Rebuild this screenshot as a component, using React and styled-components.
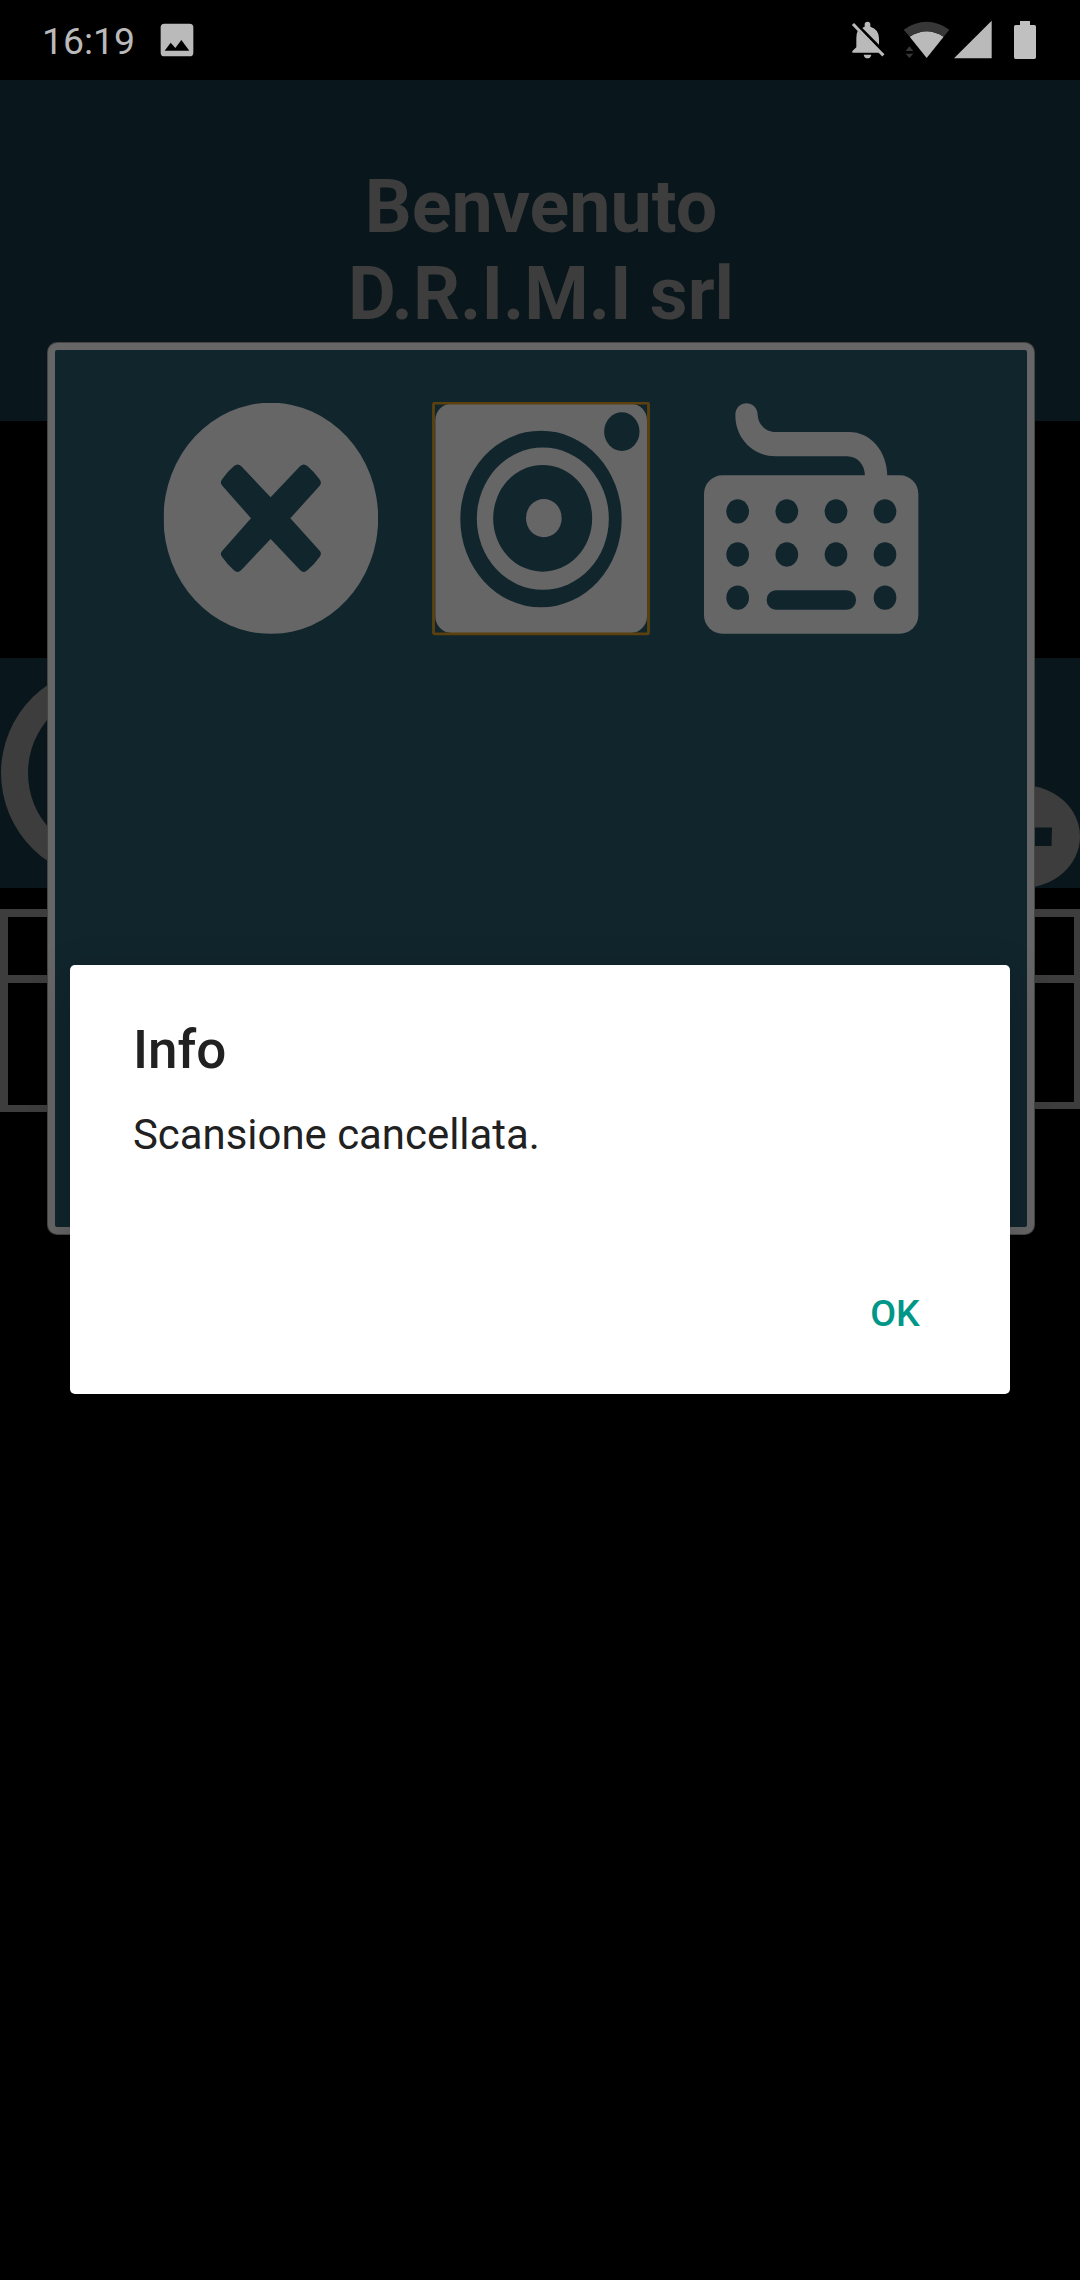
import React from "react";
import styled, { createGlobalStyle } from "styled-components";

const GlobalStyle = createGlobalStyle`
  * { box-sizing: border-box; }
  html, body { margin: 0; background: #000; }
  body { font-family: Roboto, "Noto Sans", sans-serif; }
`;

const ink = "#11252d";
const grey = "#666666";
const dimGrey = "#3d3d3d";
const dimInk = "#09161b";

const Screen = styled.main`
  position: relative;
  width: 1080px;
  height: 2280px;
  overflow: hidden;
  background: #000;
  display: flex;
  flex-direction: column;
`;

const StatusBar = styled.header`
  height: 80px;
  flex: none;
  display: flex;
  align-items: flex-start;
  justify-content: space-between;
  padding-left: 42px;
`;

const StatusLeft = styled.div`
  display: flex;
  gap: 26px;
`;

const Clock = styled.span`
  font-size: 37.4px;
  line-height: 44px;
  padding-top: 19px;
  width: 92px;
  white-space: nowrap;
  color: #bababa;
`;

const Glyphs = styled.svg`
  display: block;
  width: ${(p) => p.$w}px;
  height: ${(p) => p.$h}px;
`;

const Welcome = styled.section`
  height: 341px;
  flex: none;
  padding: 84px 0 0 2px;
  background: ${dimInk};
`;

const WelcomeTitle = styled.h1`
  margin: 0;
  font-size: 73.6px;
  line-height: 87px;
  font-weight: 700;
  text-align: center;
  color: ${dimGrey};
`;

const ActionBand = styled.section`
  height: 230px;
  flex: none;
  margin-top: 237px;
  display: flex;
  justify-content: space-between;
  background: ${dimInk};
`;

const Grid = styled.section`
  display: flex;
  align-items: flex-start;
  margin-top: 21px;
`;

const GridColumn = styled.div`
  flex: 1;
  height: ${(p) => p.$height}px;
  display: flex;
  flex-direction: column;
  border: 7px solid ${dimGrey};
  border-top-width: 8px;
  border-left-width: ${(p) => p.$left}px;
  border-right-width: ${(p) => p.$right}px;
`;

const GridHead = styled.div`
  height: 66px;
  border-bottom: 8px solid ${dimGrey};
`;

const ScanPanel = styled.section`
  position: absolute;
  left: 48px;
  top: 343px;
  width: 986px;
  height: 891px;
  border: 7px solid ${grey};
  border-radius: 9px;
  background: ${ink};
  box-shadow: 0 0 0 1px #454545;
  display: flex;
  align-items: flex-start;
  padding: 52px 0 0 107px;
  gap: 52px;
`;

const PanelButton = styled.button`
  display: block;
  width: 218px;
  height: 234px;
  flex: none;
  padding: 0;
  border: 0;
  background: none;
`;

const Dialog = styled.section`
  position: absolute;
  left: 70px;
  top: 965px;
  width: 939.7px;
  height: 428.5px;
  border-radius: 5px;
  background: #fff;
  color: #212121;
  display: flex;
  flex-direction: column;
  padding: 54px 63px 0;
  box-shadow: 0 12px 44px rgba(0, 0, 0, 0.2);
`;

const DialogTitle = styled.h2`
  margin: 0;
  font-size: 53px;
  line-height: 62px;
  font-weight: 500;
`;

const DialogText = styled.p`
  margin: 29px 0 0;
  font-size: 41.9px;
  line-height: 50px;
`;

const DialogActions = styled.footer`
  display: flex;
  justify-content: flex-end;
  padding: 131px 27px 0 0;
`;

const DialogButton = styled.button`
  padding: 0;
  border: 0;
  background: none;
  font: 500 37.5px/44px Roboto, sans-serif;
  color: #009688;
`;

function PictureIcon() {
  return (
    <Glyphs $w={34} $h={80} viewBox="480 0 102 240">
      <path
        fill="#bababa"
        fillRule="evenodd"
        d="M493 71H569Q580 71 580 82V158Q580 169 569 169H493Q482 169 482 158V82Q482 71 493 71ZM494 152H568L544 120L526 144L512 128Z"
      />
    </Glyphs>
  );
}

function SystemIcons() {
  return (
    <Glyphs $w={260} $h={80} viewBox="0 0 780 240">
      <g fill="#bababa">
        <path d="M134 80V73Q134 65 142.500 65Q151 65 151 73V80Q177 88 177 115V134L127 84Q130 81 134 80Z" />
        <path d="M113 92L179 158H97V153L109 142V115Q109 101 113 92Z" />
        <path d="M131 164H154Q152 175 142.500 175Q133 175 131 164Z" />
        <path d="M402 175L515 62V175Z" />
        <path d="M320 174L269 110Q320 77 371 110Z" />
      </g>
      <path d="M102 75L187 163" stroke="#bababa" strokeWidth="9" strokeLinecap="square" />
      <path d="M110 72L190 155" stroke="#000" strokeWidth="5" />
      <path d="M251 89Q320 42 388 89L371 110Q320 77 269 110Z" fill="#373737" />
      <path d="M257 153L268 139L280 153ZM257 161H280L268 174Z" fill="#373737" />
      <path
        d="M600 63H630V75H643Q648 75 648 80V172Q648 177 643 177H587Q582 177 582 172V80Q582 75 587 75H600Z"
        fill="#c0c0c0"
      />
    </Glyphs>
  );
}

function RingIcon() {
  return (
    <Glyphs $w={216} $h={230} viewBox="0 0 216 230">
      <path
        fill={dimGrey}
        fillRule="evenodd"
        d="M1 115A108 107 0 0 1 217 115A108 107 0 0 1 1 115ZM28 115A81 82 0 0 0 190 115A81 82 0 0 0 28 115Z"
      />
    </Glyphs>
  );
}

function AddIcon() {
  return (
    <Glyphs $w={216} $h={230} viewBox="864 658 216 230">
      <ellipse cx="1022" cy="836.500" rx="58" ry="51.500" fill={dimGrey} />
      <path d="M992 827.500H1012V809H1031V827.500H1052L1051.500 846H1031V865H1012V846H992Z" fill={dimInk} />
    </Glyphs>
  );
}

function CancelIcon() {
  return (
    <Glyphs $w={218} $h={234} viewBox="66 66 654 702">
      <clipPath id="cancelEdge">
        <rect x="71" y="69" width="643" height="692" />
      </clipPath>
      <ellipse cx="392.500" cy="415" rx="322" ry="347" fill={grey} clipPath="url(#cancelEdge)" />
      <path
        fill={ink}
        d="M392 352L480 259Q491 248 502 258Q522 275 538 297Q547 308 539 317L451 415L539 512Q547 521 538 532Q522 555 502 571Q491 581 480 570L392 477L304 570Q293 581 282 571Q262 554 247 532Q238 521 247 512L333 415L247 317Q238 308 247 297Q262 275 282 258Q293 248 304 259Z"
      />
    </Glyphs>
  );
}

function CameraIcon() {
  return (
    <Glyphs $w={218} $h={234} viewBox="36 66 654 702">
      <rect x="46" y="71" width="635" height="688" rx="48" ry="50" fill={grey} />
      <rect x="40.500" y="69.500" width="645" height="692" rx="4" fill="none" stroke="#5c410e" strokeWidth="8.500" />
      <ellipse cx="363" cy="417" rx="242" ry="265" fill={ink} />
      <ellipse cx="368.500" cy="416" rx="198" ry="213.500" fill={grey} />
      <ellipse cx="368" cy="415" rx="148.500" ry="160" fill={ink} />
      <ellipse cx="371.500" cy="414.500" rx="53.500" ry="57.500" fill={grey} />
      <ellipse cx="605.500" cy="155" rx="53" ry="58" fill={ink} />
    </Glyphs>
  );
}

const keyRows = [
  [394, [173, 320.5, 468, 615]],
  [523.5, [173, 320.5, 468, 615]],
  [653, [173, 615]],
];

function KeyboardIcon() {
  return (
    <Glyphs $w={218} $h={234} viewBox="66 66 654 702">
      <rect x="72" y="286" width="643" height="475" rx="55" fill={grey} />
      <path
        fill={grey}
        d="M166 106C166 58 233 58 233 106C235 135 258 156 286 156H508C570 156 622 212 622 290H555C555 254 533 229 501 229H286C218 229 166 174 166 106Z"
      />
      {keyRows.map(([y, xs]) =>
        xs.map((x) => <ellipse key={`${x}-${y}`} cx={x} cy={y} rx="34" ry="36.500" fill={ink} />)
      )}
      <rect x="260" y="631" width="268" height="58" rx="28" fill={ink} />
    </Glyphs>
  );
}

export default function App() {
  return (
    <>
      <GlobalStyle />
      <Screen>
        <StatusBar>
          <StatusLeft>
            <Clock>16:19</Clock>
            <PictureIcon />
          </StatusLeft>
          <SystemIcons />
        </StatusBar>
        <Welcome>
          <WelcomeTitle>
            Benvenuto
            <br />
            D.R.I.M.I srl
          </WelcomeTitle>
        </Welcome>
        <ActionBand>
          <RingIcon />
          <AddIcon />
        </ActionBand>
        <Grid>
          <GridColumn $height={203} $left={8} $right={4}>
            <GridHead />
          </GridColumn>
          <GridColumn $height={200} $left={4} $right={6}>
            <GridHead />
          </GridColumn>
        </Grid>
        <ScanPanel>
          <PanelButton>
            <CancelIcon />
          </PanelButton>
          <PanelButton>
            <CameraIcon />
          </PanelButton>
          <PanelButton>
            <KeyboardIcon />
          </PanelButton>
        </ScanPanel>
        <Dialog role="alertdialog">
          <DialogTitle>Info</DialogTitle>
          <DialogText>Scansione cancellata.</DialogText>
          <DialogActions>
            <DialogButton>OK</DialogButton>
          </DialogActions>
        </Dialog>
      </Screen>
    </>
  );
}
